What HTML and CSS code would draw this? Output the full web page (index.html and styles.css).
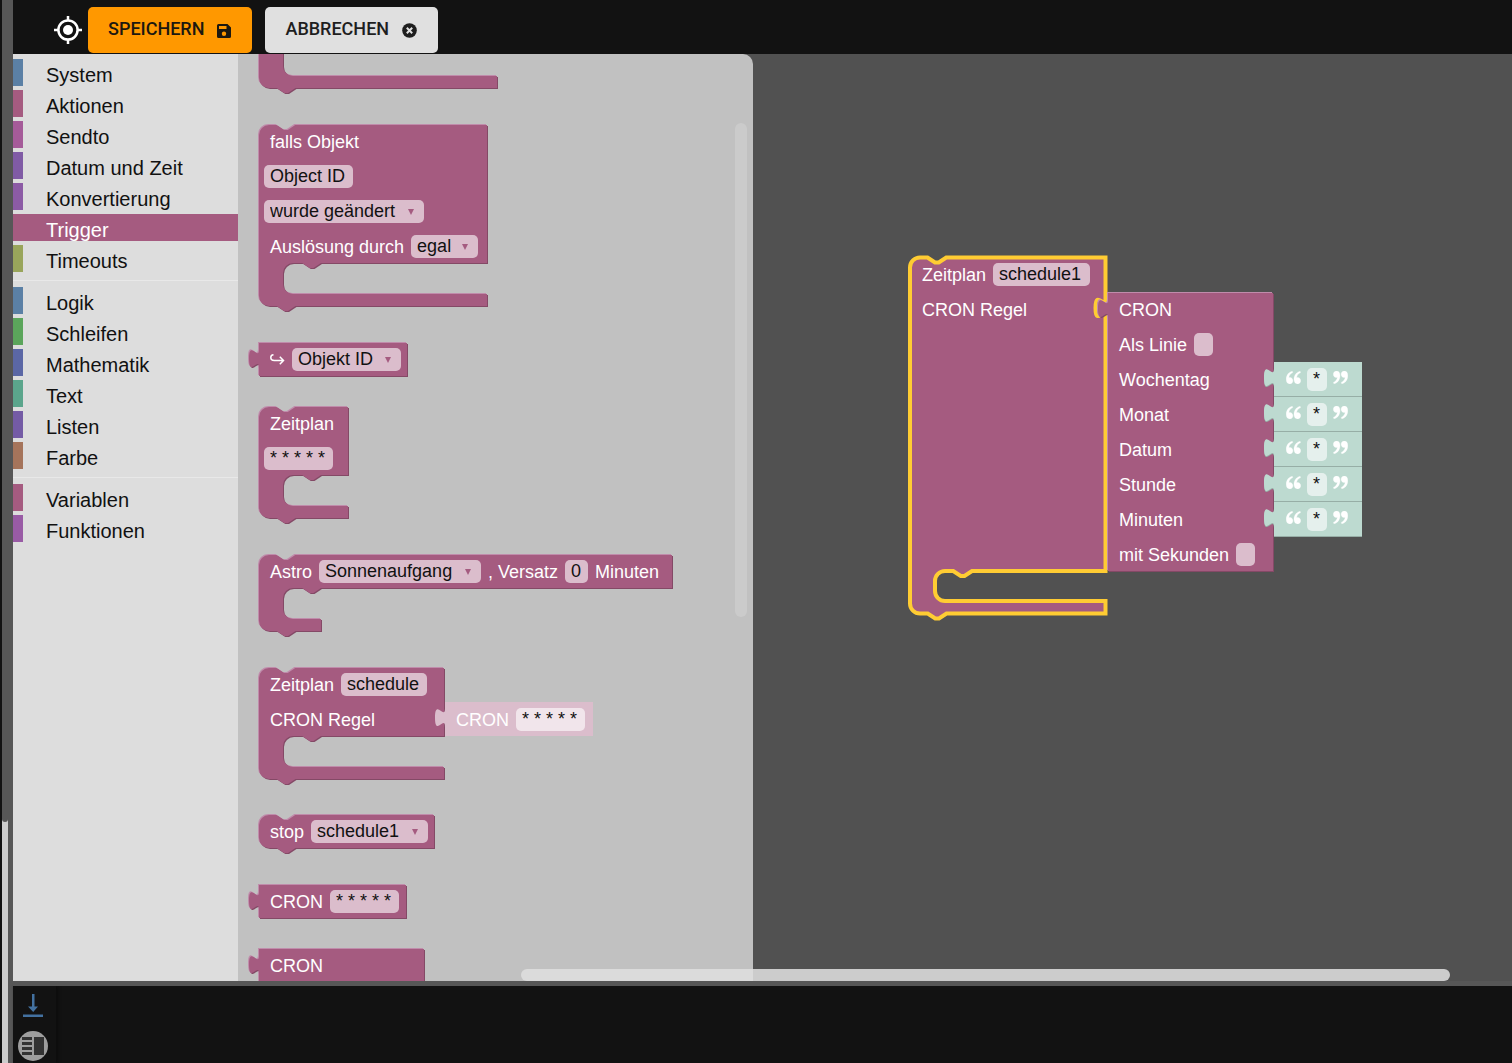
FILE: index.html
```html
<!DOCTYPE html>
<html lang="de">
<head>
<meta charset="utf-8">
<title>Blockly Editor</title>
<link rel="stylesheet" href="styles.css">
</head>
<body>
<svg class="defs" aria-hidden="true">
  <defs>
    <symbol id="quote-open" viewBox="0 0 15 13">
      <path d="M6.300.2C2.300 1.200.2 4.400.2 8.600.2 11.400 1.600 12.900 3.700 12.900c1.900 0 3.200-1.400 3.200-3.200S5.700 6.500 4 6.500c-.5 0-.9.1-1.200.2.3-2.300 1.600-4 4-5.100zM14.100.2C10.100 1.200 8 4.400 8 8.600c0 2.800 1.400 4.300 3.500 4.300 1.900 0 3.200-1.400 3.200-3.200s-1.200-3.200-2.900-3.200c-.5 0-.9.1-1.200.2.3-2.300 1.600-4 4-5.100z" stroke="#fff" stroke-width=".3"/>
    </symbol>
  </defs>
</svg>
<div class="app">
  <aside class="gutter" aria-hidden="true"><div class="gutter-thumb"></div></aside>
  <div class="editor">
    <header class="toolbar">
      <button class="locate" type="button" aria-label="Zentrieren">
        <svg width="28" height="28" viewBox="0 0 28 28"><circle cx="14" cy="14" r="9.600" fill="none" stroke="#fff" stroke-width="2.500"/><circle cx="14" cy="14" r="5" fill="#fff"/><path d="M14 0v5M14 23v5M0 14h5M23 14h5" stroke="#fff" stroke-width="2.500"/></svg>
      </button>
      <button class="btn btn-save" type="button">SPEICHERN
        <svg width="14" height="14" viewBox="0 0 14 14"><path fill-rule="evenodd" d="M1.500 0h9L14 3.500v9a1.500 1.500 0 0 1-1.500 1.500h-11A1.500 1.500 0 0 1 0 12.500v-11A1.500 1.500 0 0 1 1.500 0zM2 2v3h7.500V2zM7 7.500a2.200 2.200 0 1 0 0 4.400 2.200 2.200 0 0 0 0-4.400z"/></svg>
      </button>
      <button class="btn btn-cancel" type="button">ABBRECHEN
        <svg width="15" height="15" viewBox="0 0 15 15"><circle cx="7.500" cy="7.500" r="7.300"/><path d="M4.800 4.800l5.400 5.400M10.200 4.800l-5.400 5.400" stroke="#e0e0e0" stroke-width="2"/></svg>
      </button>
    </header>

    <main class="workspace">
      <nav class="toolbox">
        <ul class="categories">
          <li><a class="category c-blue" href="#system">System</a></li>
          <li><a class="category c-rose" href="#aktionen">Aktionen</a></li>
          <li><a class="category c-pink" href="#sendto">Sendto</a></li>
          <li><a class="category c-violet" href="#datum">Datum und Zeit</a></li>
          <li><a class="category c-purple" href="#konvertierung">Konvertierung</a></li>
          <li><a class="category c-rose is-selected" href="#trigger">Trigger</a></li>
          <li><a class="category c-olive" href="#timeouts">Timeouts</a></li>
        </ul>
        <ul class="categories">
          <li><a class="category c-blue" href="#logik">Logik</a></li>
          <li><a class="category c-green" href="#schleifen">Schleifen</a></li>
          <li><a class="category c-indigo" href="#mathematik">Mathematik</a></li>
          <li><a class="category c-mint" href="#text">Text</a></li>
          <li><a class="category c-grape" href="#listen">Listen</a></li>
          <li><a class="category c-brown" href="#farbe">Farbe</a></li>
        </ul>
        <ul class="categories">
          <li><a class="category c-rose" href="#variablen">Variablen</a></li>
          <li><a class="category c-plum" href="#funktionen">Funktionen</a></li>
        </ul>
      </nav>

      <section class="flyout" aria-label="Trigger">
        <div class="block block-cut">
          <svg class="shape" width="1" height="1"><path d="M0-20H24V11a10 10 0 0 0 10 10H238V33H36.500l-7.500 5h-3.750l-7.500-5H10a10 10 0 0 1-10-10z"/></svg>
        </div>

        <div class="block block-mouth">
          <svg class="shape" width="1" height="1"><path d="M0 10a10 10 0 0 1 10-10h7.500l7.500 5h3.750l7.500-5H228V138H62l-7.500 5h-3.750l-7.500-5H34a10 10 0 0 0-10 10v11a10 10 0 0 0 10 10H228v12H36.500l-7.500 5h-3.750l-7.500-5H10a10 10 0 0 1-10-10z"/></svg>
          <div class="row"><span class="label">falls Objekt</span></div>
          <div class="row"><input class="field w-object" type="text" value="Object ID" aria-label="Object ID"></div>
          <div class="row"><span class="drop"><select class="field w-changed" aria-label="Bedingung"><option>wurde geändert</option></select></span></div>
          <div class="row"><label class="label" for="ack">Auslösung durch</label><span class="drop"><select class="field w-ack" id="ack"><option>egal</option></select></span></div>
        </div>

        <div class="block">
          <svg class="shape" width="1" height="1"><path d="M0 0H148V33H0V25c0-12.500-10 10-10-9.375s10 3.125 10-9.375z"/></svg>
          <div class="row"><svg class="arrow" width="15" height="12" viewBox="0 0 15 12"><path d="M3.500.8C1.500 1 .8 2.200.8 3.500c0 2 1.500 3 3.500 3h9M9.800 2.800l3.700 3.700-3.700 3.700" fill="none" stroke="#fff" stroke-width="1.500"/></svg><span class="drop"><select class="field w-objekt" aria-label="Objekt ID"><option>Objekt ID</option></select></span></div>
        </div>

        <div class="block block-mouth">
          <svg class="shape" width="1" height="1"><path d="M0 10a10 10 0 0 1 10-10h7.500l7.500 5h3.750l7.500-5H89V68H62l-7.500 5h-3.750l-7.500-5H34a10 10 0 0 0-10 10v11a10 10 0 0 0 10 10H89v12H36.500l-7.500 5h-3.750l-7.500-5H10a10 10 0 0 1-10-10z"/></svg>
          <div class="row"><label class="label" for="plan">Zeitplan</label></div>
          <div class="row"><input class="field w-cron" id="plan" type="text" value="* * * * *"></div>
        </div>

        <div class="block block-mouth">
          <svg class="shape" width="1" height="1"><path d="M0 10a10 10 0 0 1 10-10h7.500l7.500 5h3.750l7.500-5H413V33H62l-7.500 5h-3.750l-7.500-5H34a10 10 0 0 0-10 10v11a10 10 0 0 0 10 10H62v12H36.500l-7.500 5h-3.750l-7.500-5H10a10 10 0 0 1-10-10z"/></svg>
          <div class="row"><label class="label" for="astro">Astro</label><span class="drop"><select class="field w-astro" id="astro"><option>Sonnenaufgang</option></select></span><label class="label" for="offset">, Versatz</label><input class="field w-digit" id="offset" type="text" value="0"><span class="label">Minuten</span></div>
        </div>

        <div class="block block-mouth">
          <svg class="shape" width="1" height="1"><path d="M0 10a10 10 0 0 1 10-10h7.500l7.500 5h3.750l7.500-5H185V68H62l-7.500 5h-3.750l-7.500-5H34a10 10 0 0 0-10 10v11a10 10 0 0 0 10 10H185v12H36.500l-7.500 5h-3.750l-7.500-5H10a10 10 0 0 1-10-10z"/></svg>
          <div class="row"><label class="label" for="sched">Zeitplan</label><input class="field w-schedule" id="sched" type="text" value="schedule"></div>
          <div class="row row-value"><span class="label">CRON Regel</span>
            <div class="block block-shadow">
              <svg class="shape" width="1" height="1"><path d="M0 0H148V34H0V25c0-12.500-10 10-10-9.375s10 3.125 10-9.375z"/></svg>
              <div class="row"><label class="label" for="cron-shadow">CRON</label><input class="field w-cron" id="cron-shadow" type="text" value="* * * * *"></div>
            </div>
          </div>
        </div>

        <div class="block block-statement">
          <svg class="shape" width="1" height="1"><path d="M0 10a10 10 0 0 1 10-10h7.500l7.500 5h3.750l7.500-5H175V33H36.500l-7.500 5h-3.750l-7.500-5H10a10 10 0 0 1-10-10z"/></svg>
          <div class="row"><label class="label" for="stop">stop</label><span class="drop"><select class="field w-stop" id="stop"><option>schedule1</option></select></span></div>
        </div>

        <div class="block">
          <svg class="shape" width="1" height="1"><path d="M0 0H147V33H0V25c0-12.500-10 10-10-9.375s10 3.125 10-9.375z"/></svg>
          <div class="row"><label class="label" for="cron">CRON</label><input class="field w-cron" id="cron" type="text" value="* * * * *"></div>
        </div>

        <div class="block">
          <svg class="shape" width="1" height="1"><path d="M0 0H165V278H0V25c0-12.500-10 10-10-9.375s10 3.125 10-9.375z"/></svg>
          <div class="row"><span class="label">CRON</span></div>
        </div>
        <div class="flyout-scroll"></div>
      </section>

      <section class="canvas" aria-label="Arbeitsbereich">
        <div class="block placed-schedule">
          <svg class="shape shape-selected" width="1" height="1"><path d="M0 10.500a10 10 0 0 1 10-10h7.500l7.500 5h3.750l7.500-5H195.500V41.500c0 12.500-10-10-10 9.375s10-3.125 10 9.375V314H62l-7.500 5h-3.750l-7.500-5H35a10 10 0 0 0-10 10v10a10 10 0 0 0 10 10H195.500v12.500H36.500l-7.500 5h-3.750l-7.500-5H10a10 10 0 0 1-10-10z"/></svg>
          <div class="row"><label class="label" for="name">Zeitplan</label><input class="field w-schedule1" id="name" type="text" value="schedule1"></div>
          <div class="row"><span class="label">CRON Regel</span></div>
        </div>

        <div class="block placed-cron">
          <svg class="shape" width="1" height="1"><path d="M0 0H165V278H0V25c0-12.500-10 10-10-9.375s10 3.125 10-9.375z"/></svg>
          <div class="row"><span class="label">CRON</span></div>
          <div class="row"><label class="label" for="line">Als Linie</label><input class="field check" id="line" type="checkbox"></div>
          <div class="row"><label class="label" for="wd">Wochentag</label></div>
          <div class="row"><label class="label" for="mo">Monat</label></div>
          <div class="row"><label class="label" for="da">Datum</label></div>
          <div class="row"><label class="label" for="st">Stunde</label></div>
          <div class="row"><label class="label" for="mi">Minuten</label></div>
          <div class="row"><label class="label" for="sec">mit Sekunden</label><input class="field check" id="sec" type="checkbox"></div>
        </div>

        <div class="placed-texts">
          <div class="block block-text"><svg class="shape" width="1" height="1"><path d="M0 0H88V34H0V25c0-12.500-10 10-10-9.375s10 3.125 10-9.375z"/></svg><div class="row"><svg class="quote"><use href="#quote-open"/></svg><input class="field w-star" id="wd" type="text" value="*"><svg class="quote quote-close"><use href="#quote-open"/></svg></div></div>
          <div class="block block-text"><svg class="shape" width="1" height="1"><path d="M0 0H88V34H0V25c0-12.500-10 10-10-9.375s10 3.125 10-9.375z"/></svg><div class="row"><svg class="quote"><use href="#quote-open"/></svg><input class="field w-star" id="mo" type="text" value="*"><svg class="quote quote-close"><use href="#quote-open"/></svg></div></div>
          <div class="block block-text"><svg class="shape" width="1" height="1"><path d="M0 0H88V34H0V25c0-12.500-10 10-10-9.375s10 3.125 10-9.375z"/></svg><div class="row"><svg class="quote"><use href="#quote-open"/></svg><input class="field w-star" id="da" type="text" value="*"><svg class="quote quote-close"><use href="#quote-open"/></svg></div></div>
          <div class="block block-text"><svg class="shape" width="1" height="1"><path d="M0 0H88V34H0V25c0-12.500-10 10-10-9.375s10 3.125 10-9.375z"/></svg><div class="row"><svg class="quote"><use href="#quote-open"/></svg><input class="field w-star" id="st" type="text" value="*"><svg class="quote quote-close"><use href="#quote-open"/></svg></div></div>
          <div class="block block-text"><svg class="shape" width="1" height="1"><path d="M0 0H88V34H0V25c0-12.500-10 10-10-9.375s10 3.125 10-9.375z"/></svg><div class="row"><svg class="quote"><use href="#quote-open"/></svg><input class="field w-star" id="mi" type="text" value="*"><svg class="quote quote-close"><use href="#quote-open"/></svg></div></div>
        </div>
      </section>
      <div class="canvas-scroll"></div>
    </main>

    <footer class="log">
      <div class="log-tools">
        <button type="button" aria-label="Nach unten">
          <svg width="20" height="24" viewBox="0 0 20 24" fill="#4371a0"><path d="M9 0h2.500v12.500H15L10.200 18 5 12.500h4zM0 20.500h20V23H0z"/></svg>
        </button>
        <button type="button" aria-label="Layout">
          <svg width="30" height="30" viewBox="0 0 30 30"><circle cx="15" cy="15" r="15" fill="#9e9e9e"/><path d="M4 6h10v3H4zM4 11h10v3H4zM4 16h10v3H4zM4 21h10v3H4zM16 6h10v18H16z" fill="#333"/></svg>
        </button>
      </div>
    </footer>
  </div>
</div>
</body>
</html>
```
FILE: styles.css
```css
* { box-sizing: border-box; }

body {
  margin: 0;
  background: #121212;
  font-family: "Liberation Sans", Arial, sans-serif;
  overflow: hidden;
}

button { margin: 0; padding: 0; border: 0; background: none; display: flex; }

.defs { position: absolute; width: 0; height: 0; }

.app { display: flex; height: 100vh; }

/* Left page scrollbar and splitter */
.gutter {
  width: 11px;
  margin-left: 2px;
  background: #ccc;
  border-right: 5px solid #575757;
}
.gutter-thumb { height: calc(77% + 3px); background: #575757; border-radius: 0 0 3px 3px; }

.editor { flex: 1; min-width: 0; display: flex; flex-direction: column; }

/* Toolbar */
.toolbar { display: flex; align-items: center; padding: 7px 0 1px 41px; }
.locate { margin-right: 6px; }
.btn {
  align-items: center;
  gap: 13px;
  height: 46px;
  padding: 0 21px 2px 20px;
  border-radius: 5px;
  font: 500 18px/24px Roboto, sans-serif;
  color: #1c1810;
}
.btn svg { margin-top: 3px; fill: currentColor; }
.btn-save { background: #ff9800; margin-right: 13px; }
.btn-cancel { background: #e0e0e0; color: #1e1e1e; }

/* Workspace */
.workspace {
  position: relative;
  flex: 1;
  min-height: 0;
  display: flex;
  background: #515151;
  border-bottom: 5px solid #575757;
  overflow: hidden;
}

.toolbox { width: 225px; padding-top: 5px; background: #ddd; }
.categories { list-style: none; margin: 0; padding: 0; display: grid; gap: 4px; }
.categories + .categories { margin-top: 8px; padding-top: 6px; border-top: 1px solid #e8e8e8; }
.category {
  display: block;
  height: 27px;
  padding: 3px 0 0 23px;
  border-left: 10px solid;
  font-size: 20px;
  line-height: 27px;
  text-decoration: none;
  color: #111;
}
.c-blue { border-color: #5b80a5; }
.c-rose { border-color: #a55b80; }
.c-pink { border-color: #a55b99; }
.c-violet { border-color: #805ba5; }
.c-purple { border-color: #8c5ba5; }
.c-olive { border-color: #99a55b; }
.c-green { border-color: #5ba55b; }
.c-indigo { border-color: #5b67a5; }
.c-mint { border-color: #5ba58c; }
.c-grape { border-color: #745ba5; }
.c-brown { border-color: #a5745b; }
.c-plum { border-color: #995ba5; }
.is-selected { background: #a55b80; color: #fff; }

.flyout {
  position: relative;
  width: 515px;
  padding-left: 20px;
  display: flex;
  flex-direction: column;
  gap: 29px;
  background: #c1c1c1;
  border-top-right-radius: 10px;
  overflow: hidden;
}
.flyout-scroll {
  position: absolute;
  top: 69px;
  right: 6px;
  width: 12px;
  height: 494px;
  border-radius: 6px;
  background: #cbcbcb;
}
.canvas { position: relative; flex: 1; }
.canvas-scroll {
  position: absolute;
  left: 508px;
  right: 62px;
  bottom: 0;
  height: 12px;
  border-radius: 6px;
  background: rgba(223, 223, 223, .87);
}

/* Blocks: an outline drawn behind rows of labels and fields */
.block { position: relative; flex: none; }
.block-cut { height: 41px; }
.block-mouth { padding-bottom: 49px; }
.block-mouth + .block-statement { margin-top: -1px; }
.block-statement { padding-bottom: 6px; }
.shape {
  position: absolute;
  top: 1px;
  left: 1px;
  overflow: visible;
  fill: #a55b80;
  filter: drop-shadow(1px 1px 0 #844966) drop-shadow(-1px -1px 0 #c08cab);
}
.shape-selected {
  top: 0;
  left: 0;
  filter: none;
  stroke: #fc3;
  stroke-width: 4px;
}
.row {
  position: relative;
  display: flex;
  align-items: center;
  gap: 7px;
  height: 35px;
  padding-left: 6px;
}
.label { font-size: 18px; line-height: 24px; color: #fff; white-space: nowrap; }
.label:first-child, .arrow { margin-left: 6px; }

.field {
  display: block;
  height: 23px;
  margin: 0;
  padding: 0 6px;
  border: 0;
  border-radius: 5px;
  background: #dbbdcc;
  font: 18px/23px "Liberation Sans", Arial, sans-serif;
  color: #111;
  appearance: none;
}
.drop { position: relative; }
.drop::after {
  content: "";
  position: absolute;
  top: 9px;
  right: 10px;
  border: solid transparent;
  border-width: 6px 3px 0;
  border-top-color: #a55b80;
}
.w-object { width: 89px; }
.w-changed { width: 160px; }
.w-ack { width: 67px; }
.w-objekt { width: 109px; }
.w-cron { width: 69px; }
.w-astro { width: 162px; }
.w-digit { width: 23px; }
.w-schedule { width: 86px; }
.w-schedule1 { width: 97px; }
.w-stop { width: 117px; }
.w-star { width: 20px; }
.check { width: 19px; }

.row-value { width: 187px; }
.block-shadow { position: absolute; top: 0; left: 186px; }
.block-shadow .shape { fill: #dbbdcc; filter: none; top: 0; }
.block-shadow .field { background: #f1e5eb; }

.placed-schedule { position: absolute; left: 157px; top: 203px; }
.placed-cron { position: absolute; left: 354px; top: 238px; }
.placed-texts { position: absolute; left: 520px; top: 308px; }

.block-text .shape { top: 0; fill: #bddad0; filter: drop-shadow(0 1px 0 #97aea6); }
.block-text .field { background: #e5f0ed; }
.block-text .row { padding-left: 13px; gap: 6px; }
.quote { width: 15px; height: 13px; margin-bottom: 5px; fill: #fff; }
.quote-close { transform: rotate(180deg); }

/* Log panel */
.log { display: flex; height: 77px; }
.log-tools {
  width: 43px;
  padding: 8px 3px 0 0;
  display: flex;
  flex-direction: column;
  align-items: center;
  gap: 13px;
  box-shadow: 2px 0 3px #0c0c0c;
}
```
